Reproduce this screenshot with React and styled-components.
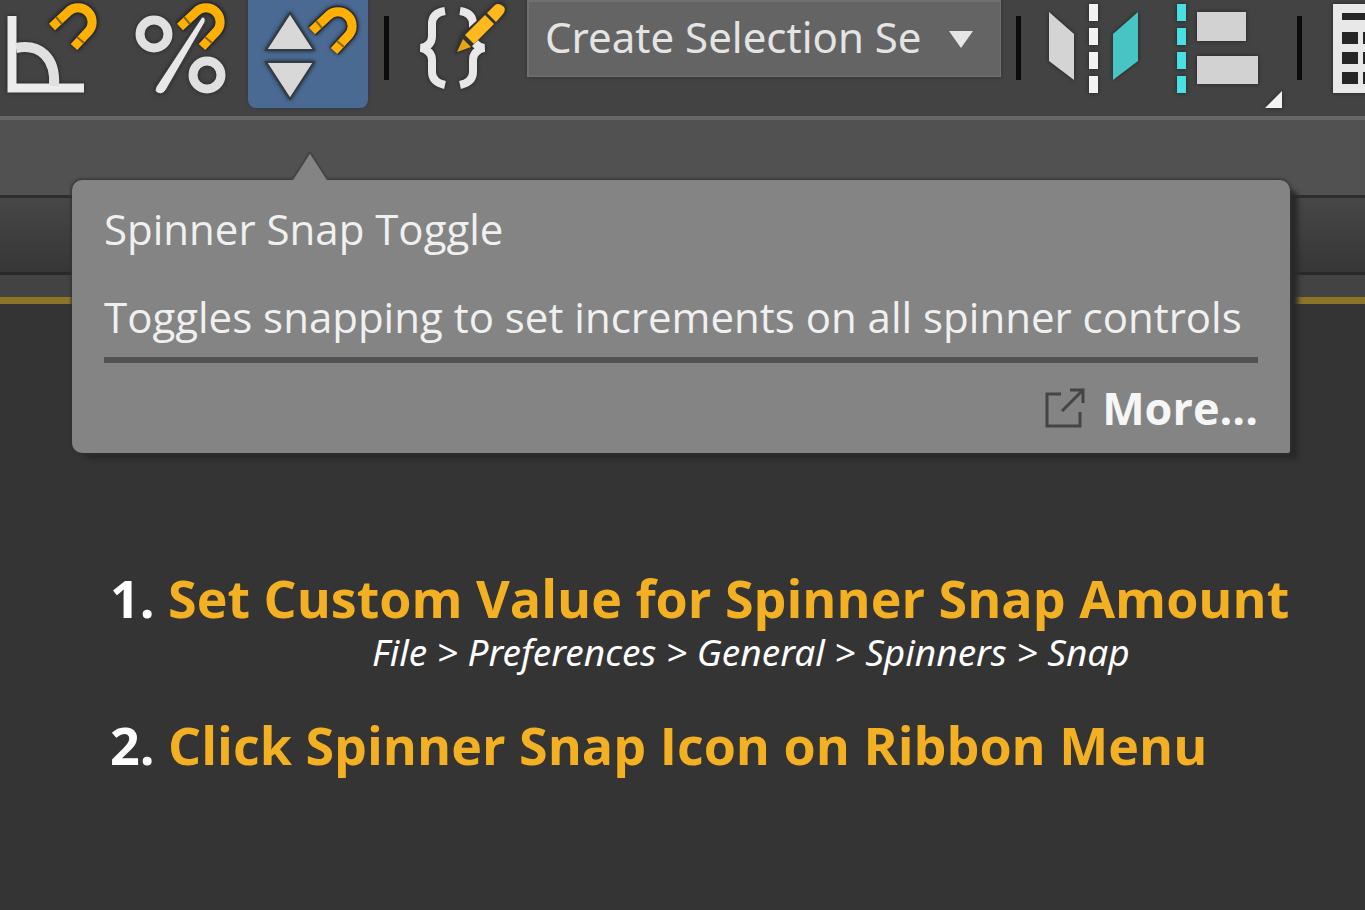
import React from "react";
import styled, { createGlobalStyle } from "styled-components";

const GlobalStyle = createGlobalStyle`
  * { box-sizing: border-box; }
  html { height: 100%; background: #343434; }
  body { margin: 0; min-height: 100%; background: #343434; overflow-x: hidden; }
  h1, h2, p, ol { margin: 0; padding: 0; }
`;

const Page = styled.main`
  position: relative;
  width: 100%;
  overflow: hidden;
  padding-bottom: 120px;
  font-family: "Open Sans", "Noto Sans", sans-serif;
`;

const Toolbar = styled.div`
  display: flex;
  align-items: flex-start;
  height: 120px;
  overflow: hidden;
  background: #434343;
  border-bottom: 4px solid #676767;
`;

const ToolButton = styled.button`
  flex: none;
  width: ${(p) => p.$width}px;
  height: 108px;
  padding: 0;
  border: 0;
  border-radius: 0 0 8px 8px;
  background: ${(p) => (p.$active ? "#4a6a94" : "transparent")};
  box-shadow: ${(p) => (p.$active ? "0 0 3px 1px #353c46" : "none")};

  svg {
    display: block;
    width: 100%;
    height: 108px;
    filter: drop-shadow(0 0 2px #222222);
  }
`;

const Separator = styled.div`
  flex: none;
  width: 5px;
  height: 64px;
  margin: 16px ${(p) => p.$after}px 0 ${(p) => p.$before}px;
  background: #0b0b0b;
`;

const SelectBox = styled.div`
  flex: none;
  display: grid;
  align-items: center;
  width: 474px;
  height: 77px;
  margin-left: 19px;
  background: #646464;
  border: 2px solid #707070;
  border-width: 2px 1px 1px 2px;
  box-shadow: 0 0 4px #303030;

  > * { grid-area: 1 / 1; }
  svg { justify-self: end; width: 26px; height: 18px; margin-right: 26px; pointer-events: none; }
`;

const SelectionSet = styled.select`
  appearance: none;
  width: 100%;
  height: 74px;
  padding: 0 60px 4px 16px;
  border: 0;
  background: transparent;
  color: #e4e4e4;
  font: 42px/60px "Noto Sans", sans-serif;
`;

const RibbonBand = styled.div`
  height: 78px;
  background: #515151;
  border-bottom: 3px solid #2e2e2e;
`;

const PanelBand = styled.div`
  height: 77px;
  background: linear-gradient(#474747, #363636);
  border-bottom: 3px solid #292929;
`;

const ViewportEdge = styled.div`
  height: 29px;
  background: #434343;
  border-bottom: 7px solid #8c7527;
`;

const Tooltip = styled.section`
  position: absolute;
  top: 180px;
  left: 72px;
  right: 75px;
  padding: 15px 32px;
  border-radius: 10px 10px 2px 10px;
  background: #848484;
  box-shadow: 0 0 3px 1px #303030, 10px 8px 5px -2px #292929;
  color: #f0f0f0;
`;

const Pointer = styled.svg`
  position: absolute;
  left: 219px;
  bottom: 100%;
  width: 38px;
  height: 28px;
`;

const TipTitle = styled.h2`
  font-size: 42px;
  font-weight: 500;
  line-height: 68px;
`;

const TipText = styled.p`
  padding: 20px 0 6px;
  border-bottom: 6px solid #525252;
  font-size: 42px;
  font-weight: 500;
  line-height: 68px;
  white-space: nowrap;
`;

const MoreLink = styled.a`
  display: flex;
  align-items: center;
  justify-content: flex-end;
  gap: 16px;
  margin-top: 15px;
  color: #f6f6f6;
  font-size: 45px;
  font-weight: 700;
  line-height: 60px;
  text-decoration: none;

  svg { width: 42px; height: 42px; }
`;

const Steps = styled.ol`
  list-style: none;
  padding: 262px 0 0 110px;
`;

const Step = styled.li`
  margin-bottom: 40px;
`;

const StepTitle = styled.h1`
  color: #f3b022;
  font-size: 52px;
  font-weight: 700;
  line-height: 64px;
  white-space: nowrap;

  span { color: #ffffff; }
`;

const StepPath = styled.p`
  padding-left: 262px;
  color: #ffffff;
  font-family: "Noto Sans", sans-serif;
  font-size: 37px;
  font-style: italic;
  line-height: 43px;
  white-space: nowrap;
`;

function Magnet({ x, y }) {
  const horseshoe = "M4 27L20 12A14 14 0 1 1 40 32L26 47";
  return (
    <g transform={`translate(${x} ${y})`} fill="none">
      <path d={horseshoe} stroke="#242c3c" strokeWidth="12" />
      <path d={horseshoe} stroke="#ffb000" strokeWidth="9" />
      <path d="M8 17l6 7M29 37l7 6" stroke="#8c6410" strokeWidth="2" />
    </g>
  );
}

function DashedAxis({ x, color }) {
  return (
    <g fill={color}>
      {[4, 28, 52, 76].map((y) => (
        <rect key={y} x={x} y={y} width="9" height="17" />
      ))}
    </g>
  );
}

export default function App() {
  return (
    <>
      <GlobalStyle />
      <Page>
        <Toolbar role="toolbar" aria-label="Main toolbar">
          <ToolButton $width={128} aria-label="Angle snap toggle">
            <svg viewBox="0 0 128 108">
              <path d="M12 16V88H84" fill="none" stroke="#ececec" strokeWidth="9" />
              <path d="M16 48C40 43 56 58 54 86" fill="none" stroke="#e0e0e0" strokeWidth="10" />
              <Magnet x={48} y={0} />
            </svg>
          </ToolButton>
          <ToolButton $width={120} aria-label="Percent snap toggle">
            <svg viewBox="128 0 120 108">
              <Magnet x={176} y={0} />
              <path d="M202 17Q206 17 205 22L166 90Q161 97 155 91L156 87Z" fill="#e8e8e8" stroke="#444" strokeWidth="1" />
              <circle cx="154" cy="34" r="14" fill="none" stroke="#e0e0e0" strokeWidth="9" />
              <circle cx="207" cy="75" r="14" fill="none" stroke="#e0e0e0" strokeWidth="9" />
            </svg>
          </ToolButton>
          <ToolButton $width={120} $active aria-label="Spinner snap toggle" aria-pressed="true">
            <svg viewBox="248 0 120 108">
              <g fill="#d8d8d8" stroke="#333b45" strokeWidth="2">
                <path d="M290 13L314 50H266Z" />
                <path d="M266 62H314L290 99Z" />
              </g>
              <Magnet x={308} y={4} />
            </svg>
          </ToolButton>
          <Separator $before={16} $after={19} />
          <ToolButton $width={100} aria-label="Edit named selection sets">
            <svg viewBox="408 0 100 108">
              <g fill="none" stroke="#e8e8e8" strokeWidth="8">
                <path d="M445 11Q432 13 432 24V36Q432 46 421 48Q432 51 432 60V72Q432 82 445 85" />
                <path d="M460 11Q473 13 473 24V36Q473 46 484 48Q473 51 473 60V72Q473 82 460 85" />
              </g>
              <path d="M455 54L462 34L496 3Q503 0 506 7Q507 11 503 16L472 46Z" fill="#333" />
              <path d="M457 52L463 39L471 47Z" fill="#e8a417" />
              <path d="M465 35L485 15L494 24L474 44Z" fill="#ffb91d" />
              <path d="M487 13L495 5Q499 2 504 7Q506 10 503 14L496 22Z" fill="#ffb91d" />
            </svg>
          </ToolButton>
          <SelectBox>
            <SelectionSet aria-label="Named selection sets" defaultValue="create">
              <option value="create">Create Selection Se</option>
            </SelectionSet>
            <svg viewBox="0 0 26 18" aria-hidden="true">
              <path d="M1 1H25L13 18Z" fill="#e6e6e6" />
            </svg>
          </SelectBox>
          <Separator $before={15} $after={19} />
          <ToolButton $width={120} aria-label="Mirror">
            <svg viewBox="1040 0 120 108">
              <path d="M1049 12L1074 34V80L1049 61Z" fill="#d4d4d4" />
              <DashedAxis x={1089} color="#f2f2f2" />
              <path d="M1138 12L1113 34V80L1138 61Z" fill="#48c4c4" />
            </svg>
          </ToolButton>
          <ToolButton $width={124} aria-label="Align">
            <svg viewBox="1160 0 124 108">
              <DashedAxis x={1177} color="#48e0e2" />
              <path d="M1197 12H1246V41H1197ZM1197 56H1258V84H1197Z" fill="#d2d2d2" />
              <path d="M1282 91V108H1265Z" fill="#f2f2f2" />
            </svg>
          </ToolButton>
          <Separator $before={13} $after={18} />
          <ToolButton $width={96} aria-label="Layer explorer">
            <svg viewBox="1320 0 96 108">
              <rect x="1333" y="4" width="76" height="89" fill="#e8e8e8" />
              <path d="M1342 13H1400V20H1342ZM1342 32H1358V44H1342ZM1342 52H1358V64H1342ZM1342 72H1358V84H1342ZM1363 32H1400V44H1363ZM1363 52H1400V64H1363ZM1363 72H1400V84H1363Z" fill="#252525" />
            </svg>
          </ToolButton>
        </Toolbar>
        <RibbonBand />
        <PanelBand />
        <ViewportEdge />

        <Tooltip role="tooltip">
          <Pointer viewBox="0 0 38 28" aria-hidden="true">
            <path d="M1 28L19 0L37 28" fill="#848484" stroke="#454545" strokeWidth="2" />
          </Pointer>
          <TipTitle>Spinner Snap Toggle</TipTitle>
          <TipText>Toggles snapping to set increments on all spinner controls</TipText>
          <MoreLink href="#more">
            <svg viewBox="0 0 42 42" fill="none" stroke="#444444" strokeWidth="3" aria-hidden="true">
              <path d="M17 7H3V39H36V25M18 24L38 4M26 3H39V16" />
            </svg>
            More...
          </MoreLink>
        </Tooltip>

        <Steps>
          <Step>
            <StepTitle><span>1.</span> Set Custom Value for Spinner Snap Amount</StepTitle>
            <StepPath>File &gt; Preferences &gt; General &gt; Spinners &gt; Snap</StepPath>
          </Step>
          <Step>
            <StepTitle><span>2.</span> Click Spinner Snap Icon on Ribbon Menu</StepTitle>
          </Step>
        </Steps>
      </Page>
    </>
  );
}
